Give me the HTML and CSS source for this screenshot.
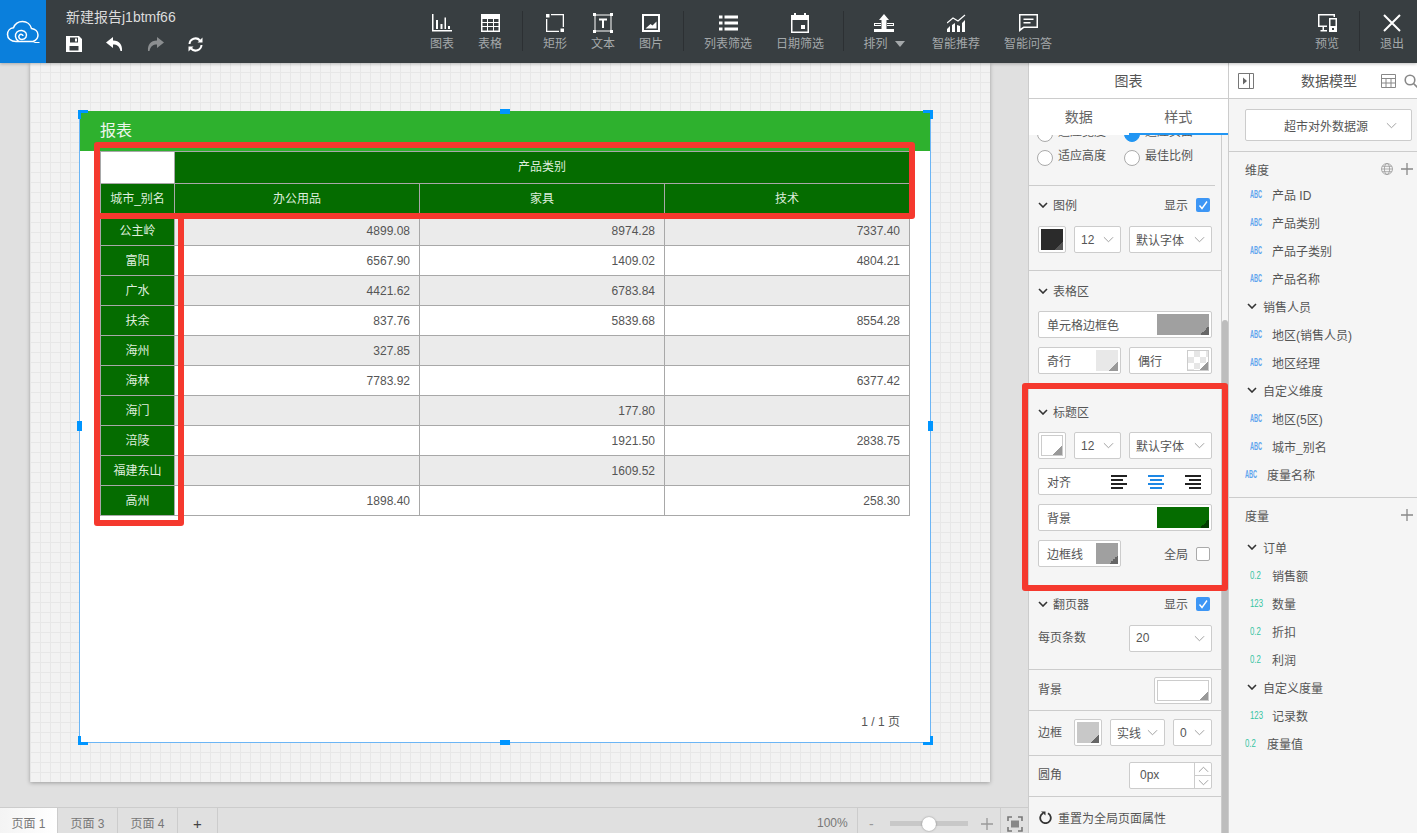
FILE: index.html
```html
<!DOCTYPE html>
<html>
<head>
	<meta charset="utf-8">
	<title>新建报告j1btmf66</title>
	<link rel="stylesheet" href="styles.css">
</head>
<body>
	<svg class="sprite">
		<symbol id="chev" viewBox="0 0 12 7"><path d="M1 1l5 5 5-5" fill="none" stroke="currentColor" stroke-width="1"/></symbol>
		<symbol id="fold" viewBox="0 0 10 6"><path d="M1 1l4 4 4-4" fill="none" stroke="currentColor" stroke-width="1.6"/></symbol>
		<symbol id="check" viewBox="0 0 14 14"><path d="M3.5 7.5l2.5 3 5-7" fill="none" stroke="#fff" stroke-width="1.4"/></symbol>
		<symbol id="plus" viewBox="0 0 12 12"><path d="M6 0v12M0 6h12" stroke="currentColor" stroke-width="1.3"/></symbol>
	</svg>

	<div class="topbar">
		<div class="logo">
			<svg width="34" height="24" viewBox="0 0 34 24" fill="none" stroke="#fff" stroke-width="1.5">
				<path d="M27 21.500H10C5 21.500 1.500 18.500 1.500 14.500 1.500 11 4 8.200 7.500 7.800 9 3.800 12.500 1.500 16.500 1.500c4.500 0 8 3 9 7 3.500.5 6.500 3 6.500 6.500 0 3-2 5.500-5 6.500z"/>
				<path d="M12.500 21C9 19 8.500 14.500 11 12c2.500-2.500 7.500-2 9 1 1.500 3-.5 6.500-4 6.500-3 0-4-3-2.500-4.500 1.300-1.200 3.300-.7 3.500 1"/>
				<path d="M27 21.500l2 1h4.500" stroke-width="1"/>
			</svg>
		</div>
		<div class="docinfo">
			<div class="doctitle">新建报告j1btmf66</div>
			<div class="docactions">
				<svg width="16" height="16" viewBox="0 0 16 16"><path fill="#fff" fill-rule="evenodd" d="M0 0h13l3 3v13H0zM4 1.500v5h8v-5zM9 2.500h2v3H9zM3.500 10v4.500h9V10z"/></svg>
				<svg width="17" height="16" viewBox="0 0 17 16"><path fill="#fff" d="M7 1L0 6.500 7 12V8.500c4 0 6.500 1.500 7.500 6.500h1.500c.5-6-2.500-10.500-9-10.500z"/></svg>
				<svg class="off" width="17" height="16" viewBox="0 0 17 16"><path fill="#8b8e90" d="M10 1l7 5.500-7 5.500V8.500c-4 0-6.500 1.500-7.500 6.500H1C.5 9 3.500 4.500 10 4.500z"/></svg>
				<svg width="15" height="15" viewBox="0 0 15 15" fill="none" stroke="#fff" stroke-width="2"><path d="M1.500 7A6 6 0 0 1 12 3.500"/><path d="M13.500 8A6 6 0 0 1 3 11.500"/><path fill="#fff" stroke="none" d="M9.500 5.500h5V.5zM5.500 9.500h-5v5z"/></svg>
			</div>
		</div>
		<div class="tool">
			<svg width="20" height="18" viewBox="0 0 20 18" fill="#fff"><path d="M0 0h1.500v16H20v1.500H0z"/><path d="M4 6h2v9H4zM8.500 10h2v5h-2zM12.500 3.500h1.500V15h-1.500zM16 12h2v3h-2z"/></svg>
			<span>图表</span>
		</div>
		<div class="tool">
			<svg width="19" height="18" viewBox="0 0 19 18"><path fill="#fff" fill-rule="evenodd" d="M0 0h19v18H0zM1.500 5v3h4.500V5zM7 5v3h5V5zM13 5v3h4.500V5zM1.500 9v3h4.500V9zM7 9v3h5V9zM13 9v3h4.500V9zM1.500 13v3.500h4.500V13zM7 13v3.500h5V13zM13 13v3.500h4.500V13z"/></svg>
			<span>表格</span>
		</div>
		<div class="toolsep"></div>
		<div class="tool">
			<svg width="18" height="18" viewBox="0 0 18 18" fill="#fff"><path d="M0 0h3.500v3.500H0zM14.500 14.500H18V18h-3.500zM5 0h13v1.300H5zM16.700 0H18v13h-1.300zM0 5h1.300v13H0zM0 16.700h13V18H0z"/></svg>
			<span>矩形</span>
		</div>
		<div class="tool">
			<svg width="20" height="20" viewBox="0 0 20 20" fill="#fff"><path d="M1.500 1.500h17v1h-17zM1.500 17.500h17v1h-17zM1.500 1.500h1v17h-1zM17.500 1.500h1v17h-1z"/><path d="M0 0h3v3H0zM17 0h3v3h-3zM0 17h3v3H0zM17 17h3v3h-3z"/><path d="M6 5.500h8v2h-3V15H9V7.500H6z"/></svg>
			<span>文本</span>
		</div>
		<div class="tool">
			<svg width="18" height="18" viewBox="0 0 18 18"><path fill="#fff" fill-rule="evenodd" d="M0 0h18v18H0zM2 2v14h14V2z"/><path fill="#fff" d="M3.500 14.500l5-4.500 2 1.500 4-4v7z"/></svg>
			<span>图片</span>
		</div>
		<div class="toolsep"></div>
		<div class="tool wide">
			<svg width="19" height="15" viewBox="0 0 19 15" fill="#fff"><path d="M0 0h3.500v3H0zM5.500 0H19v3H5.500zM0 6h3.500v3H0zM5.500 6H19v3H5.500zM0 12h3.500v3H0zM5.500 12H19v3H5.500z"/></svg>
			<span>列表筛选</span>
		</div>
		<div class="tool wide">
			<svg width="18" height="20" viewBox="0 0 18 20"><path fill="#fff" fill-rule="evenodd" d="M3 0h2v2h8V0h2v2h3v18H0V2h3zM1.500 7v11.500h15V7z"/><path fill="#fff" d="M10 12h4v4h-4z"/></svg>
			<span>日期筛选</span>
		</div>
		<div class="toolsep last"></div>
		<div class="tool wide">
			<svg width="20" height="18" viewBox="0 0 20 18" fill="#fff"><path d="M10 0l5 6h-2.500v9h-5V6H5z"/><path fill-rule="evenodd" d="M0 9h7v3H0zM1 10v1h6v-1zM13 9h7v3h-7zM13 10v1h6v-1z"/><path d="M0 15h20v3H0z"/></svg>
			<span>排列<i class="caret"></i></span>
		</div>
		<div class="tool wide">
			<svg width="19" height="18" viewBox="0 0 19 18" fill="#fff"><path d="M0 18v-3l3-3v6zM5 18v-7l3-2v9zM10 18v-7l3 1v6zM15 18V9l3-3v12z"/><path d="M0 9l6-5 5 3 7-6" fill="none" stroke="#fff" stroke-width="1.200"/></svg>
			<span>智能推荐</span>
		</div>
		<div class="tool wide">
			<svg width="19" height="18" viewBox="0 0 19 18"><path fill="#fff" fill-rule="evenodd" d="M0 0h19v14H5l-5 4zM1.500 1.500v13l3-2H17.500v-11z"/><path fill="#fff" d="M4.500 4.500h10V6h-10zM4.500 8h7v1.500h-7z"/></svg>
			<span>智能问答</span>
		</div>
		<div class="toolfill"></div>
		<div class="tool">
			<svg width="19" height="18" viewBox="0 0 19 18"><path fill="#fff" fill-rule="evenodd" d="M0 0h17v3h-1.500V1.500h-14v10H9V13H6v3h3v1.500H2.500V16H4.500v-3H0z"/><path fill="#fff" fill-rule="evenodd" d="M11 4h8v14h-8zM12.500 5.500V12h5V5.500zM14 14h2v2h-2z"/></svg>
			<span>预览</span>
		</div>
		<div class="toolsep"></div>
		<div class="tool">
			<svg width="18" height="18" viewBox="0 0 18 18"><path d="M1 1l16 16M17 1L1 17" stroke="#fff" stroke-width="2"/></svg>
			<span>退出</span>
		</div>
	</div>

	<div class="main">
		<div class="workspace">
			<div class="canvasarea">
				<div class="canvas">
					<div class="report">
						<div class="reporthead">报表</div>
						<table class="pivot">
							<colgroup><col class="c0"><col class="c1"><col class="c2"><col class="c3"></colgroup>
							<tr class="hrow"><th class="blank"></th><th colspan="3">产品类别</th></tr>
							<tr class="hrow"><th>城市_别名</th><th>办公用品</th><th>家具</th><th>技术</th></tr>
							<tr><th>公主岭</th><td>4899.08</td><td>8974.28</td><td>7337.40</td></tr>
							<tr><th>富阳</th><td>6567.90</td><td>1409.02</td><td>4804.21</td></tr>
							<tr><th>广水</th><td>4421.62</td><td>6783.84</td><td></td></tr>
							<tr><th>扶余</th><td>837.76</td><td>5839.68</td><td>8554.28</td></tr>
							<tr><th>海州</th><td>327.85</td><td></td><td></td></tr>
							<tr><th>海林</th><td>7783.92</td><td></td><td>6377.42</td></tr>
							<tr><th>海门</th><td></td><td>177.80</td><td></td></tr>
							<tr><th>涪陵</th><td></td><td>1921.50</td><td>2838.75</td></tr>
							<tr><th>福建东山</th><td></td><td>1609.52</td><td></td></tr>
							<tr><th>高州</th><td>1898.40</td><td></td><td>258.30</td></tr>
						</table>
						<div class="pager">1 / 1 页</div>
						<i class="hcorner tl"></i><i class="hcorner tr"></i><i class="hcorner bl"></i><i class="hcorner br"></i>
						<i class="hmid top"></i><i class="hmid bottom"></i><i class="hmid left"></i><i class="hmid right"></i>
						<div class="mark mark-head"></div>
						<div class="mark mark-side"></div>
					</div>
				</div>
			</div>
			<div class="pagebar">
				<div class="pagetab active">页面 1</div>
				<div class="pagetab">页面 3</div>
				<div class="pagetab">页面 4</div>
				<div class="pagetab add">+</div>
				<div class="pagefill"></div>
				<div class="zoomval">100%</div>
				<div class="zoomer">
					<span class="zminus">-</span>
					<div class="ztrack"><i class="zthumb"></i></div>
					<svg class="zplus" width="12" height="12"><use href="#plus"/></svg>
				</div>
				<div class="zfit">
					<svg width="16" height="16" viewBox="0 0 16 16" fill="none" stroke="#777" stroke-width="1.600"><path d="M1 5V1h4M11 1h4v4M15 11v4h-4M5 15H1v-4"/><path fill="#888" stroke="none" d="M4 4.500h8v7H4z"/></svg>
				</div>
			</div>
		</div>

		<div class="stylepanel">
			<div class="panelhead">图表</div>
			<div class="paneltabs"><div class="ptab">数据</div><div class="ptab on">样式</div></div>
			<div class="scrollbox">
				<div class="scrollbody">
					<div class="sec sec-fit">
						<div class="radiorow"><label class="radio"><i></i>适应宽度</label><label class="radio on"><i></i>适应页面</label></div>
						<div class="radiorow"><label class="radio"><i></i>适应高度</label><label class="radio"><i></i>最佳比例</label></div>
					</div>
					<div class="sec sec-legend">
						<div class="sechead"><svg class="fold"><use href="#fold"/></svg>图例<span class="secend">显示<svg class="cb" viewBox="0 0 14 14"><use href="#check"/></svg></span></div>
						<div class="ctlrow">
							<div class="box sq"><b class="sw dark"></b></div>
							<div class="box sel size">12<svg class="ch"><use href="#chev"/></svg></div>
							<div class="box sel font">默认字体<svg class="ch"><use href="#chev"/></svg></div>
						</div>
					</div>
					<div class="sec sec-grid">
						<div class="sechead"><svg class="fold"><use href="#fold"/></svg>表格区</div>
						<div class="ctlrow"><div class="box full">单元格边框色<b class="sw long grey"></b></div></div>
						<div class="ctlrow">
							<div class="box half">奇行<b class="sw lite"></b></div>
							<div class="box half">偶行<b class="sw checker"></b></div>
						</div>
					</div>
					<div class="sec sec-title">
						<div class="sechead"><svg class="fold"><use href="#fold"/></svg>标题区</div>
						<div class="ctlrow">
							<div class="box sq"><b class="sw white"></b></div>
							<div class="box sel size">12<svg class="ch"><use href="#chev"/></svg></div>
							<div class="box sel font">默认字体<svg class="ch"><use href="#chev"/></svg></div>
						</div>
						<div class="ctlrow">
							<div class="box full aligns">对齐
								<span class="alignset">
									<svg width="16" height="14" viewBox="0 0 16 14" fill="#222"><path d="M0 0h16v2H0zM0 4h12v2H0zM0 8h16v2H0zM0 12h12v2H0z"/></svg>
									<svg width="16" height="14" viewBox="0 0 16 14" fill="#1e88e5"><path d="M0 0h16v2H0zM2 4h12v2H2zM0 8h16v2H0zM2 12h12v2H2z"/></svg>
									<svg width="16" height="14" viewBox="0 0 16 14" fill="#222"><path d="M0 0h16v2H0zM4 4h12v2H4zM0 8h16v2H0zM4 12h12v2H4z"/></svg>
								</span>
							</div>
						</div>
						<div class="ctlrow"><div class="box full">背景<b class="sw long green"></b></div></div>
						<div class="ctlrow">
							<div class="box half">边框线<b class="sw grey"></b></div>
							<span class="globalcb">全局<i class="cb blankcb"></i></span>
						</div>
					</div>
					<div class="sec sec-pager">
						<div class="sechead"><svg class="fold"><use href="#fold"/></svg>翻页器<span class="secend">显示<svg class="cb" viewBox="0 0 14 14"><use href="#check"/></svg></span></div>
						<div class="ctlrow labelled">每页条数<div class="box sel font">20<svg class="ch"><use href="#chev"/></svg></div></div>
					</div>
					<div class="sec sec-bg">
						<div class="ctlrow labelled">背景<div class="box bgbox"><b class="sw white"></b></div></div>
					</div>
					<div class="sec sec-border">
						<div class="ctlrow">
							<span class="rowlabel">边框</span>
							<div class="box sq"><b class="sw silver"></b></div>
							<div class="box sel line">实线<svg class="ch"><use href="#chev"/></svg></div>
							<div class="box sel zero">0<svg class="ch"><use href="#chev"/></svg></div>
						</div>
					</div>
					<div class="sec sec-radius">
						<div class="ctlrow labelled">圆角
							<div class="box stepper"><span class="stepval">0px</span>
								<span class="steps">
									<span class="stepbtn"><svg class="ch up"><use href="#chev"/></svg></span>
									<span class="stepbtn"><svg class="ch"><use href="#chev"/></svg></span>
								</span>
							</div>
						</div>
					</div>
					<div class="sec-reset">
						<svg width="13" height="13" viewBox="0 0 13 13" fill="none" stroke="#333" stroke-width="1.800"><path d="M4 2.200A5.300 5.300 0 1 0 9 2.200"/><path fill="#333" stroke="none" d="M2 .5h4.500v4z"/></svg>
						重置为全局页面属性
					</div>
				</div>
				<div class="vscroll"></div>
			</div>
			<div class="mark mark-panel"></div>
		</div>

		<div class="modelpanel">
			<div class="panelhead modelhead">
				<svg class="collapse" width="16" height="16" viewBox="0 0 16 16" fill="none" stroke="#777"><path d="M.5.500h15v15H.5zM11.500 1v14"/><path fill="#666" stroke="none" d="M5 4.500l4 3.500-4 3.500z"/></svg>
				<span class="modeltitle">数据模型</span>
				<svg class="gridicon" width="15" height="14" viewBox="0 0 15 14" fill="none" stroke="#888"><path d="M.5.500h14v13H.5zM.5 4.500h14M.5 9h14M5 4.500v9M10 4.500v9"/></svg>
				<svg class="findicon" width="14" height="14" viewBox="0 0 14 14" fill="none" stroke="#888" stroke-width="1.600"><circle cx="6" cy="6" r="4.800"/><path d="M9.500 9.500L14 14"/></svg>
			</div>
			<div class="modelsel">
				<div class="box srcsel">超市对外数据源<svg class="ch"><use href="#chev"/></svg></div>
			</div>
			<div class="fieldblock dims">
				<div class="blockhead">维度
					<svg class="globe" width="12" height="12" viewBox="0 0 12 12" fill="none" stroke="#999" stroke-width=".8"><circle cx="6" cy="6" r="5.500"/><ellipse cx="6" cy="6" rx="2.600" ry="5.500"/><path d="M.5 6h11M1.200 3.300h9.600M1.200 8.700h9.600"/></svg>
					<svg class="addicon" width="12" height="12"><use href="#plus"/></svg>
				</div>
				<div class="frow"><em class="abc">ABC</em>产品 ID</div>
				<div class="frow"><em class="abc">ABC</em>产品类别</div>
				<div class="frow"><em class="abc">ABC</em>产品子类别</div>
				<div class="frow"><em class="abc">ABC</em>产品名称</div>
				<div class="frow group"><svg class="fold"><use href="#fold"/></svg>销售人员</div>
				<div class="frow"><em class="abc">ABC</em>地区(销售人员)</div>
				<div class="frow"><em class="abc">ABC</em>地区经理</div>
				<div class="frow group"><svg class="fold"><use href="#fold"/></svg>自定义维度</div>
				<div class="frow"><em class="abc">ABC</em>地区(5区)</div>
				<div class="frow"><em class="abc">ABC</em>城市_别名</div>
				<div class="frow top"><em class="abc">ABC</em>度量名称</div>
			</div>
			<div class="fieldblock meas">
				<div class="blockhead">度量
					<svg class="addicon" width="12" height="12"><use href="#plus"/></svg>
				</div>
				<div class="frow group"><svg class="fold"><use href="#fold"/></svg>订单</div>
				<div class="frow"><em class="num">0.2</em>销售额</div>
				<div class="frow"><em class="num">123</em>数量</div>
				<div class="frow"><em class="num">0.2</em>折扣</div>
				<div class="frow"><em class="num">0.2</em>利润</div>
				<div class="frow group"><svg class="fold"><use href="#fold"/></svg>自定义度量</div>
				<div class="frow"><em class="num">123</em>记录数</div>
				<div class="frow top"><em class="num">0.2</em>度量值</div>
			</div>
		</div>
	</div>
</body>
</html>
```

FILE: styles.css
```css
*
{
	box-sizing: border-box;
	font-family: "Liberation Sans", "Noto Sans CJK SC", sans-serif;
}
html, body
{
	height: 100%;
}
body
{
	margin: 0;
	overflow: hidden;
	font-size: 12px;
	color: #555;
	background: #e0e0e0;
	display: flex;
	flex-direction: column;
}
.sprite
{
	display: none;
}

/* top toolbar */
.topbar
{
	height: 63px;
	flex: none;
	display: flex;
	padding-right: 1px;
	background: #383e41;
	box-shadow: 0 1px 3px rgba(0,0,0,.25);
	position: relative;
	z-index: 5;
}
.logo
{
	width: 46px;
	background: #0a7fdc;
	display: flex;
	align-items: center;
	justify-content: center;
}
.docinfo
{
	width: 372px;
	padding: 10px 0 0 20px;
}
.doctitle
{
	font-size: 14px;
	line-height: 15px;
	color: #dcdcdc;
}
.docactions
{
	display: flex;
	align-items: center;
	margin-top: 11px;
}
.docactions svg
{
	margin-right: 24px;
}
.tool
{
	width: 48px;
	display: flex;
	flex-direction: column;
	align-items: center;
	color: #a4a8aa;
}
.tool.wide
{
	width: 72px;
}
.tool svg
{
	height: 20px;
	margin-top: 13px;
}
.tool span
{
	margin-top: 3px;
	line-height: 16px;
	white-space: nowrap;
}
.toolsep
{
	width: 1px;
	height: 40px;
	margin: 11px 8px 0;
	background: #2c3033;
}
.toolsep.last
{
	margin: 11px 4px 0 7px;
}
.toolfill
{
	flex: 1;
}
.caret
{
	display: inline-block;
	margin-left: 7px;
	border: 5px solid transparent;
	border-top: 6px solid #a4a8aa;
	border-bottom: 0;
	vertical-align: 1px;
}

/* main area */
.main
{
	flex: 1;
	display: flex;
	min-height: 0;
}
.workspace
{
	width: 1028px;
	flex: none;
	display: flex;
	flex-direction: column;
}
.canvasarea
{
	flex: 1;
	padding-left: 30px;
}
.canvas
{
	width: 960px;
	height: 719px;
	padding: 48px 0 0 49px;
	background-color: #f2f2f2;
	background-image: linear-gradient(#e7e7e7 1px, transparent 1px), linear-gradient(90deg, #e7e7e7 1px, transparent 1px);
	background-size: 10px 10px;
	background-position: 0 9px;
	box-shadow: 0 1px 4px rgba(0,0,0,.3);
}
.report
{
	position: relative;
	width: 852px;
	height: 632px;
	background: #fff;
	border: 1px solid #6bb5f5;
	border-top: 0;
}
.reporthead
{
	height: 40px;
	padding-left: 20px;
	font-size: 16px;
	line-height: 40px;
	color: #eef6ec;
	background: #2eb12e;
}
.pivot
{
	width: 809px;
	margin-left: 20px;
	table-layout: fixed;
	border-collapse: collapse;
}
.c0
{
	width: 74px;
}
.c1, .c2, .c3
{
	width: 245px;
}
.pivot tr
{
	height: 30px;
}
.pivot tr.hrow
{
	height: 32px;
}
.pivot th, .pivot td
{
	padding: 0;
	border: 1px solid #a8a8a8;
}
.pivot th
{
	padding-bottom: 3px;
	font-weight: normal;
	text-align: center;
	color: #dfeedd;
	background: #056c00;
}
.pivot .hrow th
{
	padding-bottom: 5px;
}
.pivot th.blank
{
	background: #fff;
}
.pivot td
{
	padding: 0 9px 0 10px;
	text-align: right;
	color: #555;
	background: #fff;
}
.pivot tr:nth-child(odd) td
{
	background: #ebebeb;
}
.pager
{
	position: absolute;
	right: 30px;
	bottom: 13px;
	color: #555;
}
.hcorner
{
	position: absolute;
	width: 10px;
	height: 9px;
	border: solid #0095ff;
	border-width: 0;
}
.hcorner.tl
{
	left: -2px;
	top: -1px;
	border-width: 3px 0 0 3px;
}
.hcorner.tr
{
	right: -3px;
	top: -1px;
	border-width: 3px 3px 0 0;
}
.hcorner.bl
{
	left: -2px;
	bottom: -3px;
	border-width: 0 0 3px 3px;
}
.hcorner.br
{
	right: -3px;
	bottom: -3px;
	border-width: 0 3px 3px 0;
}
.hmid
{
	position: absolute;
	width: 10px;
	height: 5px;
	background: #0095ff;
}
.hmid.top
{
	left: 420px;
	top: -2px;
}
.hmid.bottom
{
	left: 420px;
	bottom: -3px;
}
.hmid.left
{
	left: -3px;
	top: 310px;
	width: 5px;
	height: 10px;
}
.hmid.right
{
	right: -3px;
	top: 310px;
	width: 5px;
	height: 10px;
}
.mark
{
	position: absolute;
	border: 6px solid #f5392e;
	border-radius: 3px;
	pointer-events: none;
}
.mark-head
{
	left: 14px;
	top: 31px;
	width: 821px;
	height: 77px;
}
.mark-side
{
	left: 14px;
	top: 102px;
	width: 90px;
	height: 313px;
}

/* page tabs */
.pagebar
{
	height: 26px;
	flex: none;
	display: flex;
	color: #777;
	border-top: 1px solid #ccc;
}
.pagetab
{
	width: 60px;
	padding-top: 6px;
	line-height: 20px;
	text-align: center;
	border-right: 1px solid #ccc;
	background: #e0e0e0;
}
.pagetab.active
{
	width: 58px;
	background: linear-gradient(90deg, #f4f4f4, #fff);
}
.pagetab.add
{
	width: 40px;
	font-size: 15px;
	color: #444;
}
.pagefill
{
	flex: 1;
}
.zoomval
{
	width: 40px;
	padding-top: 8px;
	line-height: 14px;
}
.zoomer
{
	width: 144px;
	display: flex;
	align-items: center;
	padding: 6px 7px 0 11px;
	border-left: 1px solid #ccc;
	border-right: 1px solid #ccc;
	color: #999;
}
.zminus
{
	width: 21px;
	font-size: 14px;
}
.ztrack
{
	width: 78px;
	height: 5px;
	background: #c8c8c8;
	display: flex;
	align-items: center;
	padding-left: 32px;
}
.zthumb
{
	width: 14px;
	height: 14px;
	flex: none;
	border-radius: 50%;
	background: #fff;
	box-shadow: 0 0 2px rgba(0,0,0,.4);
}
.zplus
{
	margin-left: 13px;
	color: #999;
}
.zfit
{
	width: 27px;
	padding-top: 6px;
	display: flex;
	align-items: center;
	justify-content: center;
}

/* chart style panel */
.stylepanel
{
	position: relative;
	width: 200px;
	flex: none;
	display: flex;
	flex-direction: column;
	background: #f5f5f5;
	border-left: 1px solid #ccc;
}
.panelhead
{
	height: 36px;
	flex: none;
	text-align: center;
	line-height: 36px;
	font-size: 14px;
	color: #555;
	background: #fff;
	border-bottom: 1px solid #ccc;
}
.paneltabs
{
	height: 36px;
	flex: none;
	display: flex;
	background: #fff;
	position: relative;
	z-index: 1;
}
.ptab
{
	width: 100px;
	text-align: center;
	font-size: 14px;
	line-height: 37px;
	color: #666;
}
.ptab.on
{
	border-bottom: 2px solid #2196f3;
}
.scrollbox
{
	flex: 1;
	display: flex;
	min-height: 0;
	overflow: hidden;
}
.scrollbody
{
	width: 193px;
	flex: none;
	border-right: 1px solid #ccc;
}
.vscroll
{
	width: 6px;
	height: 513px;
	margin-top: 185px;
	flex: none;
	background: #bdbdbd;
	border-radius: 3px 3px 0 0;
}
.sec
{
	padding: 0 9px;
	border-bottom: 1px solid #ccc;
}
.sec-fit
{
	margin-top: -14px;
	margin-right: 6px;
	padding: 0 0 16px 8px;
}
.radiorow
{
	display: flex;
	height: 24px;
}
.radio
{
	width: 87px;
	display: flex;
	align-items: flex-start;
	line-height: 22px;
}
.radio i
{
	width: 16px;
	height: 16px;
	margin: 5px 5px 0 0;
	border: 1px solid #aaa;
	border-radius: 50%;
	background: #fff;
}
.radio.on i
{
	background: #2196f3;
	border-color: #2196f3;
}
.sechead
{
	display: flex;
	align-items: center;
	height: 24px;
	padding-bottom: 1px;
	color: #555;
}
.fold
{
	width: 10px;
	height: 6px;
	margin-right: 5px;
	color: #333;
}
.secend
{
	margin-left: auto;
	display: flex;
	align-items: center;
}
.cb
{
	width: 14px;
	height: 14px;
	margin-left: 8px;
	margin-right: 2px;
	background: #3d96f5;
	border-radius: 2px;
}
.blankcb
{
	display: block;
	background: #fff;
	border: 1px solid #aaa;
}
.ctlrow
{
	display: flex;
	gap: 8px;
	margin-top: 9px;
	align-items: center;
}
.ctlrow.labelled
{
	align-items: flex-start;
	justify-content: space-between;
	line-height: 27px;
}
.box
{
	height: 27px;
	display: flex;
	align-items: center;
	color: #555;
	background: #fff;
	border: 1px solid #ccc;
	border-radius: 2px;
}
.box.sq
{
	width: 28px;
	padding: 2px;
}
.box.full
{
	width: 174px;
	padding: 0 2px 0 8px;
	justify-content: space-between;
}
.box.half
{
	width: 83px;
	padding: 0 2px 0 8px;
	justify-content: space-between;
}
.sel
{
	justify-content: space-between;
	padding: 0 6px;
}
.sel.size
{
	width: 47px;
}
.sel.font
{
	width: 83px;
}
.sel.line
{
	width: 55px;
}
.sel.zero
{
	width: 39px;
}
.ch
{
	width: 11px;
	height: 7px;
	flex: none;
	color: #999;
}
.ch.up
{
	transform: rotate(180deg);
}
.sw
{
	display: block;
	width: 100%;
	height: 21px;
	flex: none;
	background-image: linear-gradient(135deg, transparent 50%, #666 50%);
	background-position: right bottom;
	background-size: 9px 9px;
	background-repeat: no-repeat;
}
.box.half .sw
{
	width: 22px;
}
.sw.long
{
	width: 52px;
}
.sw.dark
{
	background-color: #2b2b2b;
	background-image: linear-gradient(135deg, transparent 50%, #555 50%);
}
.sw.grey
{
	background-color: #a0a0a0;
}
.sw.lite
{
	background-color: #e8e8e8;
	background-image: linear-gradient(135deg, transparent 50%, #999 50%);
}
.sw.green
{
	background-color: #056c00;
	background-image: linear-gradient(135deg, transparent 50%, #033c00 50%);
}
.sw.white
{
	background-color: #fff;
	border: 1px solid #ccc;
	background-image: linear-gradient(135deg, transparent 50%, #999 50%);
}
.sw.silver
{
	background-color: #c8c8c8;
}
.sw.checker
{
	background-color: #fff;
	border: 1px solid #ccc;
	background-image: linear-gradient(135deg, transparent 50%, #999 50%), conic-gradient(#e6e6e6 25%, #fff 25% 50%, #e6e6e6 50% 75%, #fff 75%);
	background-size: 9px 9px, 12px 12px;
	background-position: right bottom, 0 0;
	background-repeat: no-repeat, repeat;
}
.sec-legend
{
	padding-top: 7px;
	padding-bottom: 17px;
}
.sec-grid
{
	padding-top: 8px;
	padding-bottom: 11px;
}
.sec-grid .ctlrow:nth-child(2)
{
	margin-top: 8px;
}
.sec-title
{
	padding-top: 14px;
	padding-bottom: 20px;
}
.sec-title .ctlrow:nth-child(2)
{
	margin-top: 8px;
}
.aligns .alignset
{
	display: flex;
	gap: 21px;
	padding-right: 8px;
}
.globalcb
{
	margin-left: auto;
	display: flex;
	align-items: center;
}
.sec-pager
{
	padding-top: 4px;
	padding-bottom: 17px;
}
.bgbox
{
	width: 58px;
	padding: 2px;
}
.sec-bg
{
	height: 41px;
	padding-top: 7px;
}
.sec-border
{
	height: 45px;
	padding-top: 8px;
}
.sec-radius
{
	height: 41px;
	padding-top: 6px;
}
.sec-bg .ctlrow, .sec-border .ctlrow, .sec-radius .ctlrow
{
	margin-top: 0;
}
.rowlabel
{
	width: 28px;
	padding-bottom: 2px;
}
.stepper
{
	width: 83px;
	justify-content: space-between;
}
.stepval
{
	padding-left: 10px;
}
.steps
{
	width: 17px;
	height: 100%;
	display: flex;
	flex-direction: column;
	border-left: 1px solid #ccc;
}
.stepbtn
{
	flex: 1;
	display: flex;
	align-items: center;
	justify-content: center;
}
.stepbtn + .stepbtn
{
	border-top: 1px solid #ccc;
}
.sec-reset
{
	height: 36px;
	padding: 4px 0 0 10px;
	display: flex;
	align-items: center;
	gap: 6px;
}
.mark-panel
{
	left: -7px;
	top: 320px;
	width: 206px;
	height: 208px;
}

/* data model panel */
.modelpanel
{
	flex: 1;
	background: #f5f5f5;
	border-left: 1px solid #ccc;
}
.modelhead
{
	display: flex;
	align-items: center;
	padding: 1px 0 0 9px;
}
.modeltitle
{
	margin-left: 47px;
	width: 56px;
	white-space: nowrap;
}
.gridicon
{
	margin-left: 24px;
}
.findicon
{
	margin-left: 8px;
	flex: none;
}
.modelsel
{
	height: 53px;
	padding: 10px 0 0 16px;
	border-bottom: 1px solid #ccc;
}
.srcsel
{
	width: 167px;
	height: 32px;
	justify-content: space-between;
	padding: 0 14px 0 38px;
	color: #555;
}
.fieldblock
{
	padding: 5px 0 0 16px;
}
.dims
{
	height: 346px;
	border-bottom: 1px solid #ccc;
}
.blockhead
{
	display: flex;
	align-items: center;
	height: 24px;
	margin-bottom: -1px;
	padding-right: 5px;
}
.blockhead .globe
{
	margin-left: auto;
}
.blockhead .addicon
{
	margin-left: 8px;
	color: #888;
}
.meas .blockhead
{
	justify-content: space-between;
	margin-bottom: 6px;
}
.frow
{
	height: 28px;
	display: flex;
	align-items: center;
	padding-left: 5px;
}
.frow.group
{
	padding-left: 2px;
}
.frow.group .fold
{
	margin-right: 6px;
}
.frow.top
{
	padding-left: 0;
}
.abc, .num
{
	width: 22px;
	flex: none;
	font-style: normal;
	font-size: 10px;
	font-weight: bold;
	color: #5fa5ee;
	transform: scaleX(.56);
	transform-origin: left center;
}
.num
{
	font-weight: normal;
	color: #35c4a2;
	transform: scaleX(.78);
}
```
